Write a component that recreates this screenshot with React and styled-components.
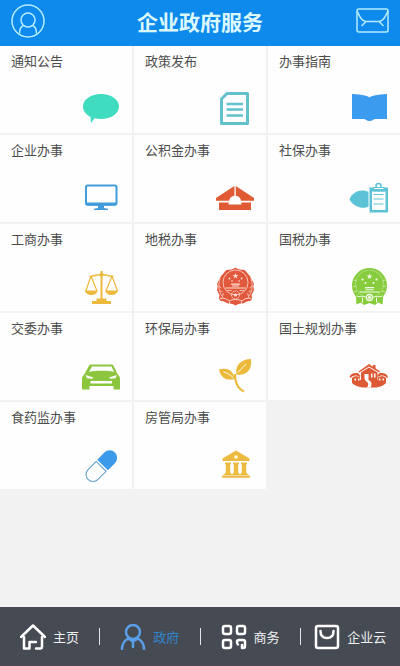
import React from "react";
import styled, { createGlobalStyle } from "styled-components";

const GlobalStyle = createGlobalStyle`
  * {
    box-sizing: border-box;
  }
  body {
    margin: 0;
    background: #f2f2f2;
    font-family: "Noto Sans CJK SC", sans-serif;
  }
  button {
    font: inherit;
    border: none;
    background: none;
    padding: 0;
    cursor: pointer;
  }
`;

const Page = styled.div`
  min-height: 100vh;
  display: flex;
  flex-direction: column;
`;

const Header = styled.header`
  display: flex;
  align-items: center;
  justify-content: space-between;
  height: 46px;
  padding: 0 11px 4px;
  background: #0d8aec;
  color: #dcf8ff;

  h1 {
    margin: 0;
    font-size: 21px;
    line-height: 30px;
    font-weight: 700;
  }
`;

const HeaderButton = styled.button`
  display: flex;
  color: #b5ecff;

  svg {
    width: 34px;
    height: 34px;
  }
`;

const Main = styled.main`
  flex: 1;
`;

const Grid = styled.div`
  display: grid;
  grid-template-columns: repeat(3, 1fr);
  gap: 2px;
`;

const CellStyled = styled.button`
  display: flex;
  flex-direction: column;
  justify-content: space-between;
  height: 87px;
  padding: 5px 11px 6px;
  background: #fefefe;
  color: #4c4c4c;
  font-size: 13px;
  line-height: 20px;
  text-align: left;

  svg {
    width: 40px;
    height: 40px;
    align-self: flex-end;
    overflow: visible;
    color: ${(props) => props.$color};
  }
`;

const Nav = styled.nav`
  display: flex;
  align-items: center;
  height: 59px;
  background: #464a53;
`;

const NavItem = styled.a`
  flex: 1;
  display: flex;
  align-items: center;
  justify-content: center;
  gap: 7px;
  height: 17px;
  color: ${(props) => (props.$active ? "#2f86cf" : "#eef0f2")};
  font-size: 13px;
  line-height: 20px;
  text-decoration: none;
  white-space: nowrap;

  & + & {
    border-left: 1px solid #e2e4e8;
  }

  svg {
    width: 26px;
    height: 26px;
    color: ${(props) => (props.$active ? "#5b9fe8" : "#ffffff")};
  }
`;

const STAR = "M0-3 .7-1 2.9-.9 1.1.4 1.8 2.4 0 1.2-1.8 2.4-1.1.4-2.9-.9-.7-1Z";

const icons = {
  bubble: (
    <path
      fill="currentColor"
      d="M20 7c10 0 18 5.500 18 12.500S30 32 20 32c-2.300 0-4.400-.3-6.400-.8L10 36l-.5-6C5 27.700 2 23.900 2 19.500 2 12.500 10 7 20 7Z"
    />
  ),
  document: (
    <g fill="none" stroke="currentColor" strokeWidth="3" strokeLinejoin="round">
      <path d="M12 6.500h20.500v30h-26V12Z" />
      <path strokeWidth="2.500" d="M11.500 17H28M11.500 22.500H28M11.500 28.500H28" />
    </g>
  ),
  book: (
    <path
      fill="currentColor"
      d="M3 7c5 .3 9 .7 13 1.500 2 .5 3 1 4.500 2 1.500-1 2.500-1.500 4.500-2C29 7.700 33 7.300 38 7v25H26.500c-2 0-3 2-6 2s-4-2-6-2H3Z"
    />
  ),
  monitor: (
    <>
      <rect x="5" y="9.500" width="30.500" height="19" rx="1.500" fill="none" stroke="currentColor" strokeWidth="2" />
      <path fill="currentColor" d="M4.500 26.500h31.500v2l-1.500 1.200H23V32l4 .7V34H13v-1.300l4-.7v-2.300H6L4.500 28.500Z" />
    </>
  ),
  fund: (
    <>
      <path fill="currentColor" d="M19.400 10v9.800a6 6 0 0 0-5.200 4.900H1V22Z" />
      <path fill="currentColor" d="M20.800 10v9.800a6 6 0 0 1 5.200 4.900h13V22Z" />
      <path fill="currentColor" d="M4 26.500h32V34H4Z" />
      <path fill="#fefefe" d="M13.500 28.500a6.500 7.500 0 0 1 13 0Z" />
    </>
  ),
  clipboard: (
    <>
      <path fill="currentColor" d="M.5 23C3 17.500 8 14.500 13 14.500c3 0 5 .5 6.500 1.500v14.500c-1.500 1-4 1.500-6.500 1.300C8 31 2 28 .5 23Z" />
      <rect x="20.500" y="11.500" width="18.500" height="25" fill="currentColor" />
      <path fill="#fefefe" d="M23 15.500h13.500v18.500H23Z" />
      <circle cx="29.500" cy="10" r="2.500" fill="none" stroke="currentColor" strokeWidth="1.500" />
      <path fill="currentColor" d="M24 11h11.500v4.500H24Z" />
      <path stroke="#fefefe" d="M25 12.500h9.500" />
      <path stroke="currentColor" strokeWidth="1.200" d="M24.500 18.500H34.500M24.500 23H34.500M24.500 28H34.500" />
    </>
  ),
  scale: (
    <>
      <g fill="none" stroke="currentColor" strokeWidth="1.200">
        <path strokeWidth="2" d="M20.500 6v29" />
        <path strokeWidth="1.600" d="M8.500 11.500c4 0 6-2 12-1.700 6-.3 8 1.700 12 1.700" />
        <path d="M10 11 4.800 26M10 11l6 15M31 11l-6 15M31 11l5.500 15" />
      </g>
      <circle cx="20.500" cy="9.500" r="2" fill="currentColor" />
      <path fill="currentColor" d="M3.800 25.500h13c-.5 2.700-3.300 4.500-6.500 4.500s-6-1.800-6.500-4.500ZM24 25.500h13c-.5 2.700-3.300 4.500-6.500 4.500S24.500 28.200 24 25.500ZM15.500 33.500h10v2.500H30v3H11v-3h4.500Z" />
    </>
  ),
  policeEmblem: (
    <>
      <path
        fill="currentColor"
        d="M20.500 2.500c2.500 2.200 6 2 9 2.500 2.500 1.800 3 4 5.500 6 .5 2.500 3 5 4 8-1 2-.5 3 0 6-1 3-2 3.500-2.500 5.500 1 2.500.5 4.500-1.500 5.500-3.500 0-5 1.500-7 2.500-2.500 0-4 0-7.500 2-3.500-2-5-2-7.500-2-2-1-3.500-2.500-7-2.500-2-1-2.500-3-1.500-5.500C4 28.500 3 28 2 25c.5-3 1-4 0-6 1-3 3.500-5.500 4-8 2.500-2 3-4.200 5.500-6 3-.5 6.500-.3 9-2.500Z"
      />
      <g fill="none" stroke="#fde0d6">
        <circle cx="20.500" cy="17.500" r="12.500" strokeWidth=".8" />
        <path
          strokeWidth=".7"
          d="M5 14c-2 6-1.500 12 2 17M36 14c2 6 1.500 12-2 17M3.500 21l3 2M4.500 26l3 .5M37.500 21l-3 2M36.500 26l-3 .5M8.500 28l-1.500 5M32.500 28l1.500 5"
        />
        <path strokeWidth=".9" d="M5 33.500c4-1 7 .5 9 2.500 4-2 9-2 13 0 2-2 5-3.500 9-2.500M14.500 36.500v2.500M26.500 36.500v2.500" />
      </g>
      <g fill="#fde0d6">
        <path transform="translate(20.500 11)" d={STAR} />
        <circle cx="14.500" cy="13.500" r=".9" />
        <circle cx="26.500" cy="13.500" r=".9" />
        <circle cx="17" cy="16" r=".8" />
        <circle cx="24" cy="16" r=".8" />
        <path d="M16.500 18.500h8l1 1.200h-10ZM17 20.500h7v1h-7ZM10.500 22.500h20v.9h-20ZM12 25h4.500v.8H12ZM24.500 25H29v.8h-4.500Z" />
      </g>
      <circle cx="20.500" cy="30" r="4" fill="none" stroke="#fde0d6" strokeWidth="1" strokeDasharray="1.500 .7" />
      <circle cx="20.500" cy="30" r="1.500" fill="#fde0d6" />
    </>
  ),
  nationalEmblem: (
    <>
      <circle cx="20.500" cy="20.500" r="17.500" fill="currentColor" />
      <path fill="currentColor" d="M6.500 28 34.500 28 33.500 39.500 29 37.500 26 40l-5.500-2-5.500 2-3-2.500-4.500 2Z" />
      <g fill="none" stroke="#f0fae0">
        <circle cx="20.500" cy="19" r="14" strokeWidth=".6" opacity=".6" />
        <path strokeWidth="1" d="M7.500 31c4 2 6-1 9 1M33.500 31c-4 2-6-1-9 1M13.500 32.500v5M27.500 32.500v5" />
        <path strokeWidth=".6" d="M5 15l2.500 1M4 21l3 .5M5 27l3-1M36 15l-2.500 1M37 21l-3 .5M36 27l-3-1" />
      </g>
      <g fill="#f4fbe9">
        <path transform="translate(20.500 11.500)" d={STAR} />
        <circle cx="13.500" cy="14.500" r="1.100" />
        <circle cx="27.500" cy="14.500" r="1.100" />
        <circle cx="16.500" cy="18" r="1" />
        <circle cx="24.500" cy="18" r="1" />
        <path d="M16.500 22h8l1.200 1.300H15.300ZM16.500 24.200h8v1.100h-8ZM10.500 26.500h20v1h-20Z" />
        <circle cx="20.500" cy="32.500" r="3.800" />
      </g>
      <circle cx="20.500" cy="32.500" r="2" fill="none" stroke="currentColor" strokeWidth="1.200" strokeDasharray="1.200 .7" />
    </>
  ),
  car: (
    <>
      <path
        fill="currentColor"
        d="M10.500 10.500h20c1 0 1.500.5 2 1.300L36.500 20c1.500 1.500 2.500 3 2.500 5v10.500h-6.500V32h-24v3.500H1V25c0-2 1-3.500 2.500-5l4.500-8.200c.5-.8 1.200-1.300 2.500-1.300Z"
      />
      <path fill="#fefefe" d="M11 12.500h19.500l2.500 5.500c-4-1-8-1.200-12.500-1.200S12 17 8 18ZM4.500 21l8 2.500-1.500 1.300-5-.5ZM36 21l-8 2.500 1.500 1.300 5-.5ZM9.500 27h21.500V29.500H9.500Z" />
    </>
  ),
  sprout: (
    <>
      <path fill="currentColor" d="M21.500 20.500C19.500 12 26 5 36 5c1.500 10-4 17-14.500 15.500ZM4 15.500c8-2 14.500.5 15.500 9.500C11 27 5.500 23.500 4 15.500Z" />
      <path fill="none" stroke="currentColor" strokeWidth="2.200" d="M20 20c-.5 6 2 14.500 9 17.500" />
      <path fill="none" stroke="#fffbe8" strokeWidth="1" d="M22.500 18.500C25.500 16 28 13.500 31 10M8.500 18c4 1 7 3 10 6" />
    </>
  ),
  village: (
    <>
      <path fill="currentColor" d="M9.500 17.500 20 10l4 2.700V11h2.500v3.200l4.500 3.300-.8 1L20 12.500 10.300 18.500Z" />
      <path fill="currentColor" d="M12 18.500l8-5 8.500 5v9H12Z" />
      <path fill="currentColor" d="M.5 23C1.500 20 4 18.500 9 19l2.500 3-1 1C7 20.500 3.500 21.500 1.500 24ZM39 23c-1-3-3.500-4.500-8.500-4L28 22l1 1c3.500-2.500 7-1.500 9 1ZM3 24c2-2 5-2.500 8-.5V26h18v-2.500c3-2 6-1.500 8 .5v5c-2 2-5 4.500-12 4.500H16C9 33.500 5 31 3 29Z" />
      <path fill="#fefefe" d="M15.500 20h4v4.500c-1 2 3 2.500 3 5 0 1.500-.5 2.500-.5 4h-4c2-3 1.500-4.500-.5-6S15.500 25 15.500 23Z" />
      <path fill="#fefefe" d="M22 19.500h1.500v4H22ZM25 19.500h1.500v4H25ZM5.500 24.500h1.500v2H5.500ZM9 24.500h1.500v2H9ZM30 24.500h1.500v2H30ZM33.500 24.500H35v2h-1.500Z" />
    </>
  ),
  pill: (
    <g transform="translate(20.500 23) rotate(-45)">
      <path fill="currentColor" d="M1.500-7.500H11.500a7.500 7.500 0 0 1 0 15H1.500Z" />
      <path fill="none" stroke="#5a9bc8" strokeWidth="1" d="M-.5-7H-12a7 7 0 0 0 0 14H-.5Z" />
    </g>
  ),
  bank: (
    <>
      <path fill="currentColor" d="M21 7.500 34.500 15.500v2.500h-27v-2.500ZM10 19.500h6v1.500l-.8.500v8l.8 1v1h-6v-1l.8-1v-8l-.8-.5ZM18 19.500h6v1.500l-.8.500v8l.8 1v1h-6v-1l.8-1v-8l-.8-.5ZM26 19.500h6v1.500l-.8.500v8l.8 1v1h-6v-1l.8-1v-8l-.8-.5ZM8.500 31h25v1.300h-25ZM7 32.800h28v2H7Z" />
      <circle cx="21" cy="14" r="1.800" fill="#fff6dc" />
    </>
  ),
};

const services = [
  { name: "通知公告", icon: "bubble", color: "#3fdcc0" },
  { name: "政策发布", icon: "document", color: "#62c1cc" },
  { name: "办事指南", icon: "book", color: "#3b9bef" },
  { name: "企业办事", icon: "monitor", color: "#429cda" },
  { name: "公积金办事", icon: "fund", color: "#e05a33" },
  { name: "社保办事", icon: "clipboard", color: "#5cc3d6" },
  { name: "工商办事", icon: "scale", color: "#edb93c" },
  { name: "地税办事", icon: "policeEmblem", color: "#e2583c" },
  { name: "国税办事", icon: "nationalEmblem", color: "#86cc3c" },
  { name: "交委办事", icon: "car", color: "#8cc63f" },
  { name: "环保局办事", icon: "sprout", color: "#ecb93a" },
  { name: "国土规划办事", icon: "village", color: "#dd5a36" },
  { name: "食药监办事", icon: "pill", color: "#3b9bea" },
  { name: "房管局办事", icon: "bank", color: "#ecba3e" },
];

const tabs = [
  {
    name: "主页",
    icon: (
      <>
        <path d="M1 13 13 1.500 25 13" />
        <path d="M4 13v11.500h5.500V18H16" />
        <path d="M22 13v9.500c0 1.200-.8 2-2 2h-4" />
      </>
    ),
  },
  {
    name: "政府",
    active: true,
    icon: (
      <>
        <circle cx="13" cy="8" r="7" />
        <path d="M8 14.500C4 17 2 20.500 2 25M18 14.500c4 2.500 6 6 6 10.500" />
        <path d="M8 14.500c2 1.500 4 2 5 3 1-1 3-1.500 5-3M13 17v6" />
      </>
    ),
  },
  {
    name: "商务",
    icon: (
      <>
        <rect x="2" y="2" width="8" height="8" rx="2" />
        <rect x="16" y="2" width="8" height="8" rx="2" />
        <rect x="2" y="16" width="8" height="8" rx="2" />
        <path d="M17 20.500c-1-.5-1-1-1-2.500 0-1.500.5-2 2-2h4c1.500 0 2 .5 2 2v4c0 1.500-.5 2-2 2h-1v-3" />
      </>
    ),
  },
  {
    name: "企业云",
    icon: (
      <>
        <rect x="2" y="2" width="22" height="22" rx="2" />
        <path d="M6.500 7c0 4.500 2.500 7 6.500 7s6.500-2.500 6.500-7" />
      </>
    ),
  },
];

function Cell({ el }) {
  return (
    <CellStyled type="button" $color={el.color}>
      <span>{el.name}</span>
      <svg viewBox="0 0 40 40" aria-hidden="true">
        {icons[el.icon]}
      </svg>
    </CellStyled>
  );
}

function App() {
  return (
    <Page>
      <GlobalStyle />
      <Header>
        <HeaderButton type="button" aria-label="个人中心">
          <svg viewBox="0 0 34 34" fill="none" stroke="currentColor" strokeWidth="1.500">
            <circle cx="17" cy="17" r="16" />
            <circle cx="17" cy="16" r="7" />
            <path d="M8.500 29.500c0-4 1.500-7 4-8M25.500 29.500c0-4-1.500-7-4-8" />
          </svg>
        </HeaderButton>
        <h1>企业政府服务</h1>
        <HeaderButton type="button" aria-label="消息">
          <svg viewBox="0 0 34 34" fill="none" stroke="currentColor" strokeWidth="1.500">
            <rect x="2" y="5" width="31" height="23" rx="2" />
            <path d="M2 7c3 6 4.500 9.500 8.500 10.500h14C28.500 16.500 30 13 33 7M11 17.500 6.500 22M24 17.500l4.500 4.500" />
          </svg>
        </HeaderButton>
      </Header>
      <Main>
        <Grid>
          {services.map((el) => (
            <Cell key={el.name} el={el} />
          ))}
        </Grid>
      </Main>
      <Nav>
        {tabs.map((tab) => (
          <NavItem key={tab.name} href="#" $active={tab.active}>
            <svg
              viewBox="0 0 26 26"
              fill="none"
              stroke="currentColor"
              strokeWidth="2.500"
              strokeLinecap="round"
              strokeLinejoin="round"
              aria-hidden="true"
            >
              {tab.icon}
            </svg>
            <span>{tab.name}</span>
          </NavItem>
        ))}
      </Nav>
    </Page>
  );
}

export default App;
